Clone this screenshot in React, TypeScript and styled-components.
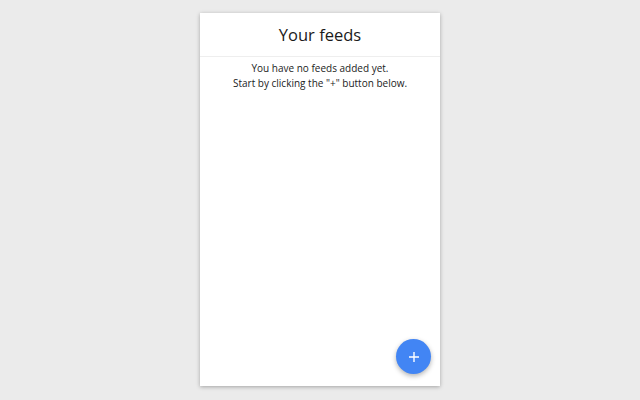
import styled, { createGlobalStyle } from "styled-components";

const GlobalStyle = createGlobalStyle`
  html, body {
    margin: 0;
    padding: 0;
    background: #ebebeb;
    font-family: "Open Sans", "Liberation Sans", sans-serif;
  }
`;

const Page = styled.div`
  width: 640px;
  height: 400px;
  display: flex;
  justify-content: center;
  padding-top: 13px;
  box-sizing: border-box;
`;

const Card = styled.div`
  position: relative;
  width: 240px;
  height: 373px;
  background: #fff;
  box-shadow: 0 1px 4px rgba(0, 0, 0, 0.3);
  display: flex;
  flex-direction: column;
`;

const Header = styled.h1`
  margin: 0;
  height: 43px;
  display: flex;
  align-items: center;
  justify-content: center;
  font-size: 16.5px;
  font-weight: 400;
  color: #1a1a1a;
  border-bottom: 1px solid #eee;
`;

const Empty = styled.p`
  margin: 0;
  padding-top: 4px;
  text-align: center;
  font-size: 10px;
  line-height: 15px;
  color: #222;
`;

const Fab = styled.button`
  position: absolute;
  right: 9px;
  bottom: 12px;
  width: 35px;
  height: 35px;
  border-radius: 50%;
  border: none;
  padding: 0;
  background: #4285f4;
  box-shadow: 0 2px 5px rgba(0, 0, 0, 0.3);
  display: flex;
  align-items: center;
  justify-content: center;
  cursor: pointer;
`;

function App() {
  return (
    <>
      <GlobalStyle />
      <Page>
        <Card>
          <Header>Your feeds</Header>
          <Empty>
            You have no feeds added yet.
            <br />
            Start by clicking the "+" button below.
          </Empty>
          <Fab aria-label="Add feed">
            <svg width="12" height="12" viewBox="0 0 12 12">
              <path d="M6 1v10M1 6h10" stroke="#fff" strokeWidth="1.4" />
            </svg>
          </Fab>
        </Card>
      </Page>
    </>
  );
}

export default App;
